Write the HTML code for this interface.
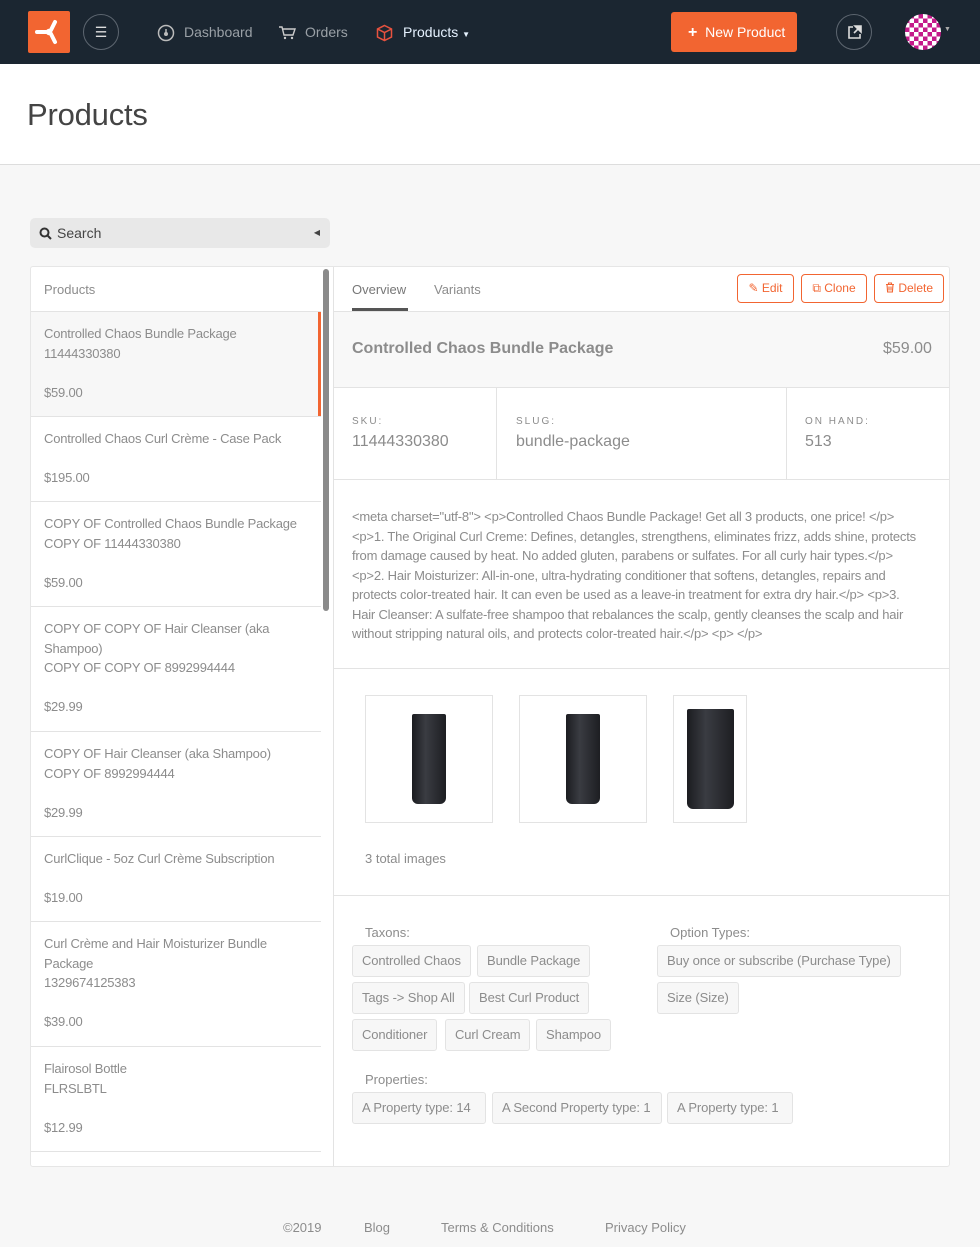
<!DOCTYPE html>
<html><head><meta charset="utf-8"><style>
*{box-sizing:border-box;margin:0;padding:0}
body{width:980px;height:1247px;background:#f7f7f7;font-family:"Liberation Sans",sans-serif;color:#8c8c8c;position:relative;overflow:hidden;font-size:13px}
.a{position:absolute;white-space:nowrap}
.nav{position:absolute;left:0;top:0;width:980px;height:64px;background:#1b2631}
.hdr{position:absolute;left:0;top:64px;width:980px;height:101px;background:#fff;border-bottom:1px solid #ddd}
.card{position:absolute;left:30px;top:266px;width:920px;height:901px;background:#fff;border:1px solid #e6e6e6;border-radius:3px}
.li{position:absolute;left:31px;width:290px;border-bottom:1px solid #e3e3e3;font-size:13px;line-height:19.5px;padding:12px 13px;letter-spacing:-.2px}
.tag{position:absolute;height:32px;border:1px solid #e3e3e3;background:#f7f7f7;border-radius:3px;font-size:13px;line-height:30px;padding:0 9px;letter-spacing:-.1px;white-space:nowrap}
.ob{position:absolute;top:274px;height:29px;border:1px solid #f26531;border-radius:4px;color:#f26531;font-size:12px;line-height:27px;padding:0 8px;white-space:nowrap;text-align:center}
.lab{font-size:10px;letter-spacing:2px;color:#8c8c8c}
.val{font-size:16px;color:#8c8c8c;margin-top:6px}
.img{position:absolute;top:695px;height:128px;border:1px solid #e3e3e3;background:#fff}
.tube{position:absolute;background:linear-gradient(90deg,#1b1c20,#3a3c42 40%,#1d1e22);border-radius:2px 2px 6px 6px}
</style></head><body>
<div class="nav">
 <div class="a" style="left:28px;top:11px;width:42px;height:42px;background:#f26531;border-radius:2px">
  <svg width="42" height="42" viewBox="0 0 42 42"><path d="M9 21h9 M23 19l4-8 M23 23l4 8" stroke="#fff" stroke-width="4" stroke-linecap="round"/><circle cx="21" cy="21" r="3.2" fill="#fff"/></svg>
 </div>
 <div class="a" style="left:83px;top:14px;width:36px;height:36px;border:1px solid #5d6670;border-radius:50%;color:#ddd;text-align:center;line-height:34px;font-size:14px">☰</div>
 <svg class="a" style="left:157px;top:24px" width="18" height="18" viewBox="0 0 18 18"><circle cx="9" cy="9" r="7.5" fill="none" stroke="#bbb" stroke-width="1.5"/><circle cx="9" cy="10" r="2" fill="#bbb"/><path d="M9 10V5" stroke="#bbb" stroke-width="1.5"/></svg>
 <div class="a" style="left:184px;top:24px;font-size:14px;color:#9aa0a6">Dashboard</div>
 <svg class="a" style="left:278px;top:25px" width="18" height="16" viewBox="0 0 18 16"><path d="M1 2h3l2 8h9l2-6H5" fill="none" stroke="#ccc" stroke-width="1.4"/><circle cx="7" cy="13" r="1.2" fill="#ccc"/><circle cx="14" cy="13" r="1.2" fill="#ccc"/></svg>
 <div class="a" style="left:305px;top:24px;font-size:14px;color:#9aa0a6">Orders</div>
 <svg class="a" style="left:376px;top:24px" width="17" height="18" viewBox="0 0 17 18"><path d="M8.5 1.5L15.5 5v8l-7 3.5-7-3.5V5z M1.5 5l7 3.5 7-3.5 M8.5 8.5v8" fill="none" stroke="#e8523f" stroke-width="1.5"/></svg>
 <div class="a" style="left:403px;top:24px;font-size:14px;color:#e6f2ff">Products <span style="font-size:8px">▼</span></div>
 <div class="a" style="left:671px;top:12px;width:126px;height:40px;background:#f26531;border-radius:3px;color:#fff;font-size:14px;line-height:40px;padding-left:17px"><b style="font-size:16px">+</b>&nbsp;&nbsp;New Product</div>
 <div class="a" style="left:836px;top:14px;width:36px;height:36px;border:1px solid #5d6670;border-radius:50%"><svg style="margin:10px" width="15" height="15" viewBox="0 0 15 15"><path d="M6 2H2v11h11V9" fill="none" stroke="#ddd" stroke-width="1.6"/><path d="M8 1h6v6z M13 2L7 8" stroke="#ddd" stroke-width="1.6" fill="#ddd"/></svg></div>
 <div class="a" style="left:905px;top:14px;width:36px;height:36px;border-radius:50%;background:repeating-conic-gradient(#c4198a 0 25%,#fff 0 50%) 0 0/9px 9px"></div>
 <div class="a" style="left:944px;top:26px;font-size:7px;color:#aaa">▼</div>
</div>
<div class="hdr"><div class="a" style="left:27px;top:33px;font-size:31px;color:#444;letter-spacing:-.2px">Products</div></div>

<div class="a" style="left:30px;top:218px;width:300px;height:30px;background:#e8e8e8;border-radius:5px;color:#444;font-size:14px;line-height:30px;padding-left:27px">Search
 <svg style="position:absolute;left:9px;top:9px" width="13" height="13" viewBox="0 0 13 13"><circle cx="5.5" cy="5.5" r="4" fill="none" stroke="#333" stroke-width="2"/><path d="M8.5 8.5L12 12" stroke="#333" stroke-width="2"/></svg>
 <span style="position:absolute;right:10px;top:0;font-size:8px">◀</span></div>

<div class="card"></div>
<div class="a" style="left:333px;top:267px;width:1px;height:899px;background:#e3e3e3"></div>
<div class="a" style="left:31px;top:267px;width:290px;height:45px;border-bottom:1px solid #e3e3e3;padding:15px 13px;font-size:13px">Products</div>
<div class="li" style="top:312px;height:105px;background:#f7f7f7">Controlled Chaos Bundle Package<br>11444330380<br><br>$59.00</div>
<div class="a" style="left:318px;top:312px;width:3px;height:104px;background:#f26531"></div>
<div class="li" style="top:417px;height:85px">Controlled Chaos Curl Crème - Case Pack<br><br>$195.00</div>
<div class="li" style="top:502px;height:105px">COPY OF Controlled Chaos Bundle Package<br>COPY OF 11444330380<br><br>$59.00</div>
<div class="li" style="top:607px;height:125px">COPY OF COPY OF Hair Cleanser (aka<br>Shampoo)<br>COPY OF COPY OF 8992994444<br><br>$29.99</div>
<div class="li" style="top:732px;height:105px">COPY OF Hair Cleanser (aka Shampoo)<br>COPY OF 8992994444<br><br>$29.99</div>
<div class="li" style="top:837px;height:85px">CurlClique - 5oz Curl Crème Subscription<br><br>$19.00</div>
<div class="li" style="top:922px;height:125px">Curl Crème and Hair Moisturizer Bundle<br>Package<br>1329674125383<br><br>$39.00</div>
<div class="li" style="top:1047px;height:105px">Flairosol Bottle<br>FLRSLBTL<br><br>$12.99</div>
<div class="a" style="left:323px;top:269px;width:6px;height:342px;background:#8a8a8a;border-radius:3px"></div>

<div class="a" style="left:352px;top:282px;font-size:13px;color:#777">Overview</div>
<div class="a" style="left:352px;top:308px;width:56px;height:3px;background:#555"></div>
<div class="a" style="left:434px;top:282px;font-size:13px">Variants</div>
<div class="ob" style="left:737px;width:57px">✎ Edit</div>
<div class="ob" style="left:801px;width:66px">⧉ Clone</div>
<div class="ob" style="left:874px;width:70px"><svg width="10" height="11" viewBox="0 0 10 11" style="vertical-align:-1px"><path d="M1 2.5h8 M3.5 2.5V1h3v1.5 M2 2.5l.6 7.5h4.8l.6-7.5 M4 4.5v4 M6 4.5v4" fill="none" stroke="#f26531" stroke-width="1.1"/></svg> Delete</div>
<div class="a" style="left:334px;top:311px;width:615px;height:77px;background:#f8f8f8;border-top:1px solid #e3e3e3;border-bottom:1px solid #e3e3e3"></div>
<div class="a" style="left:352px;top:340px;font-size:16px;font-weight:bold;color:#8c8c8c">Controlled Chaos Bundle Package</div>
<div class="a" style="left:883px;top:340px;font-size:16px">$59.00</div>
<div class="a" style="left:352px;top:416px"><div class="lab">SKU:</div><div class="val">11444330380</div></div>
<div class="a" style="left:496px;top:388px;width:1px;height:91px;background:#e3e3e3"></div>
<div class="a" style="left:516px;top:416px"><div class="lab">SLUG:</div><div class="val">bundle-package</div></div>
<div class="a" style="left:786px;top:388px;width:1px;height:91px;background:#e3e3e3"></div>
<div class="a" style="left:805px;top:416px"><div class="lab">ON HAND:</div><div class="val">513</div></div>
<div class="a" style="left:334px;top:479px;width:615px;height:1px;background:#e3e3e3"></div>
<div class="a" style="left:352px;top:507px;font-size:13px;line-height:19.5px;letter-spacing:-.2px">&lt;meta charset="utf-8"&gt; &lt;p&gt;Controlled Chaos Bundle Package! Get all 3 products, one price! &lt;/p&gt;<br>&lt;p&gt;1. The Original Curl Creme: Defines, detangles, strengthens, eliminates frizz, adds shine, protects<br>from damage caused by heat. No added gluten, parabens or sulfates. For all curly hair types.&lt;/p&gt;<br>&lt;p&gt;2. Hair Moisturizer: All-in-one, ultra-hydrating conditioner that softens, detangles, repairs and<br>protects color-treated hair. It can even be used as a leave-in treatment for extra dry hair.&lt;/p&gt; &lt;p&gt;3.<br>Hair Cleanser: A sulfate-free shampoo that rebalances the scalp, gently cleanses the scalp and hair<br>without stripping natural oils, and protects color-treated hair.&lt;/p&gt; &lt;p&gt; &lt;/p&gt;</div>
<div class="a" style="left:334px;top:668px;width:615px;height:1px;background:#e3e3e3"></div>
<div class="img" style="left:365px;width:128px"><div class="tube" style="left:46px;top:18px;width:34px;height:90px"></div></div>
<div class="img" style="left:519px;width:128px"><div class="tube" style="left:46px;top:18px;width:34px;height:90px"></div></div>
<div class="img" style="left:673px;width:74px"><div class="tube" style="left:13px;top:13px;width:47px;height:100px"></div></div>
<div class="a" style="left:365px;top:851px;font-size:13px">3 total images</div>
<div class="a" style="left:334px;top:895px;width:615px;height:1px;background:#e3e3e3"></div>
<div class="a" style="left:365px;top:925px">Taxons:</div>
<div class="a" style="left:670px;top:925px">Option Types:</div>
<div class="tag" style="left:352px;top:945px">Controlled Chaos</div>
<div class="tag" style="left:477px;top:945px">Bundle Package</div>
<div class="tag" style="left:352px;top:982px">Tags -&gt; Shop All</div>
<div class="tag" style="left:469px;top:982px">Best Curl Product</div>
<div class="tag" style="left:352px;top:1019px">Conditioner</div>
<div class="tag" style="left:445px;top:1019px">Curl Cream</div>
<div class="tag" style="left:536px;top:1019px">Shampoo</div>
<div class="tag" style="left:657px;top:945px">Buy once or subscribe (Purchase Type)</div>
<div class="tag" style="left:657px;top:982px">Size (Size)</div>
<div class="a" style="left:365px;top:1072px">Properties:</div>
<div class="tag" style="left:352px;top:1092px;width:134px">A Property type: 14</div>
<div class="tag" style="left:492px;top:1092px;width:170px">A Second Property type: 1</div>
<div class="tag" style="left:667px;top:1092px;width:126px">A Property type: 1</div>

<div class="a" style="left:283px;top:1220px">©2019</div>
<div class="a" style="left:364px;top:1220px">Blog</div>
<div class="a" style="left:441px;top:1220px">Terms &amp; Conditions</div>
<div class="a" style="left:605px;top:1220px">Privacy Policy</div>
</body></html>
